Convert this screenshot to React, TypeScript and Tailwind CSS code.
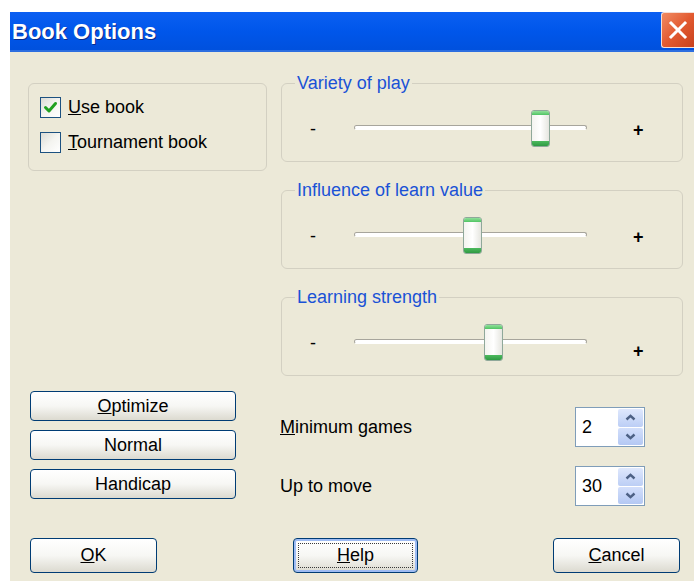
import React from "react";

const font = { fontFamily: '"Liberation Sans", Arial, sans-serif' };

function Thumb() {
  return (
    <div className="flex h-[37px] w-[19px] flex-col overflow-hidden rounded-[3px] border border-[#8fa89a] bg-gradient-to-r from-[#f4f4f0] via-white to-[#e6e6e0]">
      <div className="h-[4px] bg-gradient-to-b from-[#8fe09a] to-[#4fc463]" />
      <div className="flex-1" />
      <div className="h-[5px] bg-gradient-to-b from-[#4dba5e] to-[#2f9a43]" />
    </div>
  );
}

function Slider({ value, plusLow }: { value: number; plusLow?: boolean }) {
  const trackW = 233;
  const thumbLeft = Math.round(value * trackW - 9.5);
  return (
    <div className="flex h-[37px] items-center pl-[28px]">
      <span className="w-[44px] text-[18px] leading-none text-black">-</span>
      <div className="relative h-[37px] w-[233px]">
        <div className="absolute left-0 right-0 top-[15px] h-[5px] rounded-[3px] border border-[#a7a59c] border-b-white bg-white" />
        <div className="absolute top-0" style={{ left: thumbLeft }}>
          <Thumb />
        </div>
      </div>
      <span className={"ml-[46px] text-[18px] font-bold leading-none text-black " + (plusLow ? "mt-[16px]" : "mt-[2px]")}>+</span>
    </div>
  );
}

function Group({ title, value, plusLow }: { title: string; value: number; plusLow?: boolean }) {
  return (
    <fieldset className="h-[90px] rounded-[6px] border border-[#d3d0c2] px-0">
      <legend className="ml-[13px] px-[2px] text-[18px] leading-[22px] text-[#1a52d6]">{title}</legend>
      <div className="mt-[16px]">
        <Slider value={value} plusLow={plusLow} />
      </div>
    </fieldset>
  );
}

function XPButton({ children, w, h, focus }: { children: React.ReactNode; w: string; h: string; focus?: boolean }) {
  return (
    <div
      className={
        "flex items-center justify-center rounded-[4px] border border-[#003c74] bg-gradient-to-b from-white via-[#f7f7f4] to-[#dcdad0] text-[18px] text-black " +
        w +
        " " +
        h +
        (focus ? " shadow-[inset_0_0_0_2px_#9fbcf3]" : "")
      }
    >
      {focus ? (
        <div className="flex h-[calc(100%-8px)] w-[calc(100%-8px)] items-center justify-center border border-dotted border-[#3a3a3a]">
          {children}
        </div>
      ) : (
        children
      )}
    </div>
  );
}

function Checkbox({ checked }: { checked?: boolean }) {
  return (
    <div className="flex h-[21px] w-[21px] items-center justify-center border border-[#1c5180] bg-gradient-to-br from-[#dcdcd5] via-[#f4f4f0] to-white">
      {checked && (
        <svg width="15" height="15" viewBox="0 0 15 15">
          <path d="M2.5 7.5 L6 11 L12.5 3.5" fill="none" stroke="#21a121" strokeWidth="3" strokeLinecap="round" strokeLinejoin="round" />
        </svg>
      )}
    </div>
  );
}

function Chevron({ up }: { up?: boolean }) {
  return (
    <svg width="11" height="7" viewBox="0 0 11 7">
      <path d={up ? "M1.5 5.5 L5.5 1.8 L9.5 5.5" : "M1.5 1.5 L5.5 5.2 L9.5 1.5"} fill="none" stroke="#4d6185" strokeWidth="2.4" />
    </svg>
  );
}

function Spin({ value }: { value: string }) {
  return (
    <div className="flex h-[40px] w-[70px] items-stretch border border-[#7f9db9] bg-white p-[1px]">
      <div className="flex flex-1 items-center pl-[5px] text-[18px] text-black">{value}</div>
      <div className="flex w-[25px] flex-col gap-[1px]">
        <div className="flex flex-1 items-center justify-center rounded-[2px] bg-gradient-to-b from-[#dfe8fd] to-[#bccef5]">
          <Chevron up />
        </div>
        <div className="flex flex-1 items-center justify-center rounded-[2px] bg-gradient-to-b from-[#d3dffb] to-[#b4c8f3]">
          <Chevron />
        </div>
      </div>
    </div>
  );
}

export default function App() {
  return (
    <div className="flex h-[581px] w-[694px] flex-col overflow-hidden bg-white pl-[10px] pt-[12px]" style={font}>
      {/* Title bar */}
      <div className="flex h-[40px] items-start justify-between bg-gradient-to-b from-[#0b5ff2] via-[#0056ea] to-[#0050dc] shadow-[inset_0_-2px_0_#2c6ee0]">
        <div className="pl-[2px] pt-[7px] text-[22px] font-bold leading-[26px] text-white [text-shadow:1px_1px_0_#0a2a8a]">
          Book Options
        </div>
        <div className="flex h-[36px] w-[33px] items-center justify-center rounded-l-[3px] border border-r-0 border-[#f4ddd4] bg-gradient-to-br from-[#f08a62] via-[#e25a30] to-[#c8401c]">
          <svg width="20" height="20" viewBox="0 0 20 20">
            <path d="M3 3 L17 17 M17 3 L3 17" stroke="white" strokeWidth="3" strokeLinecap="square" />
          </svg>
        </div>
      </div>

      {/* Body */}
      <div className="flex flex-1 flex-col bg-[#ece9d8] pl-[18px] pr-[11px]">
        {/* Top area */}
        <div className="mt-[20px] flex items-start gap-[14px]">
          <div className="mt-[11px] flex h-[88px] w-[239px] flex-col gap-[14px] rounded-[6px] border border-[#d3d0c2] pl-[11px] pt-[13px]">
            <div className="flex items-center gap-[7px] text-[18px] leading-[21px] text-black">
              <Checkbox checked />
              <span>
                <span className="underline">U</span>se book
              </span>
            </div>
            <div className="flex items-center gap-[7px] text-[18px] leading-[21px] text-black">
              <Checkbox />
              <span>
                <span className="underline">T</span>ournament book
              </span>
            </div>
          </div>
          <div className="flex flex-1 flex-col gap-[17px]">
            <Group title="Variety of play" value={0.8} />
            <Group title="Influence of learn value" value={0.507} />
            <Group title="Learning strength" value={0.597} plusLow />
          </div>
        </div>

        {/* Middle area */}
        <div className="mt-[15px] flex items-start">
          <div className="ml-[2px] flex flex-col gap-[9px]">
            <XPButton w="w-[206px]" h="h-[30px]">
              <span>
                <span className="underline">O</span>ptimize
              </span>
            </XPButton>
            <XPButton w="w-[206px]" h="h-[30px]">Normal</XPButton>
            <XPButton w="w-[206px]" h="h-[30px]">Handicap</XPButton>
          </div>
          <div className="ml-[44px] mt-[16px] flex w-[365px] flex-col gap-[19px]">
            <div className="flex items-center justify-between">
              <span className="text-[18px] text-black">
                <span className="underline">M</span>inimum games
              </span>
              <Spin value="2" />
            </div>
            <div className="flex items-center justify-between">
              <span className="text-[18px] text-black">Up to move</span>
              <Spin value="30" />
            </div>
          </div>
        </div>

        {/* Bottom buttons */}
        <div className="mt-[32px] ml-[2px] flex items-center">
          <XPButton w="w-[127px]" h="h-[35px]">
            <span>
              <span className="underline">O</span>K
            </span>
          </XPButton>
          <div className="ml-[136px]">
            <XPButton w="w-[125px]" h="h-[35px]" focus>
              <span>
                <span className="underline">H</span>elp
              </span>
            </XPButton>
          </div>
          <div className="ml-[135px]">
            <XPButton w="w-[127px]" h="h-[35px]">
              <span>
                <span className="underline">C</span>ancel
              </span>
            </XPButton>
          </div>
        </div>
      </div>
    </div>
  );
}
